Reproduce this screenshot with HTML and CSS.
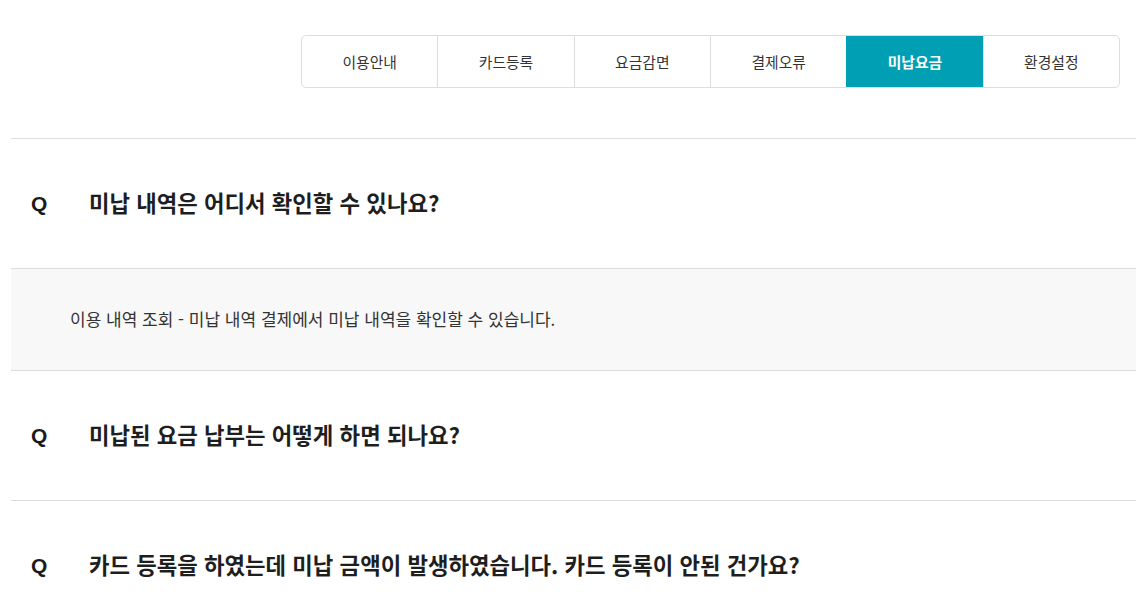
FILE: index.html
```html
<!DOCTYPE html>
<html lang="ko">
<head>
<meta charset="utf-8">
<link rel="stylesheet" href="styles.css">
</head>
<body>
<div class="page">
  <nav class="tabs">
    <a class="tab">이용안내</a>
    <a class="tab">카드등록</a>
    <a class="tab">요금감면</a>
    <a class="tab">결제오류</a>
    <a class="tab active">미납요금</a>
    <a class="tab">환경설정</a>
  </nav>
  <ul class="faq">
    <li class="item">
      <div class="question"><span class="q">Q</span><span class="qtext">미납 내역은 어디서 확인할 수 있나요?</span></div>
      <div class="answer">이용 내역 조회 - 미납 내역 결제에서 미납 내역을 확인할 수 있습니다.</div>
    </li>
    <li class="item">
      <div class="question"><span class="q">Q</span><span class="qtext">미납된 요금 납부는 어떻게 하면 되나요?</span></div>
    </li>
    <li class="item">
      <div class="question"><span class="q">Q</span><span class="qtext">카드 등록을 하였는데 미납 금액이 발생하였습니다. 카드 등록이 안된 건가요?</span></div>
    </li>
  </ul>
</div>
</body>
</html>
```
FILE: styles.css
```css
html, body {
  margin: 0;
  padding: 0;
  background: #fff;
}
body {
  font-family: "Noto Sans CJK KR", "Noto Sans", sans-serif;
  color: #222;
}
.page {
  padding-left: 11px;
  overflow: hidden;
}
.tabs {
  display: flex;
  margin: 35px 16px 0 auto;
  width: 819px;
  height: 53px;
  border: 1px solid #ddd;
  border-radius: 5px;
  box-sizing: border-box;
  overflow: hidden;
}
.tab {
  flex: 1;
  display: flex;
  align-items: center;
  justify-content: center;
  padding-bottom: 1px;
  font-size: 14.8px;
  color: #333;
  border-left: 1px solid #ddd;
}
.tab:first-child {
  border-left: none;
}
.tab.active {
  background: #009fb4;
  color: #fff;
  font-weight: 700;
  border-left-color: #009fb4;
}
.faq {
  list-style: none;
  margin: 50px 0 0 0;
  padding: 0;
}
.item {
  border-top: 1px solid #ddd;
}
.question {
  height: 129px;
  box-sizing: border-box;
  display: flex;
  align-items: center;
  padding: 0 0 4px 20px;
}
.q {
  font-family: "Liberation Sans", Arial, sans-serif;
  font-weight: 700;
  font-size: 21px;
  width: 58px;
  color: #1a1a1a;
  position: relative;
  top: 2px;
}
.qtext {
  font-weight: 700;
  font-size: 22.3px;
  color: #1e1e1e;
}
.answer {
  border-top: 1px solid #ddd;
  background: #f8f8f8;
  height: 102px;
  box-sizing: border-box;
  display: flex;
  align-items: center;
  padding: 0 0 2px 59px;
  font-size: 17px;
  color: #333;
}
```
